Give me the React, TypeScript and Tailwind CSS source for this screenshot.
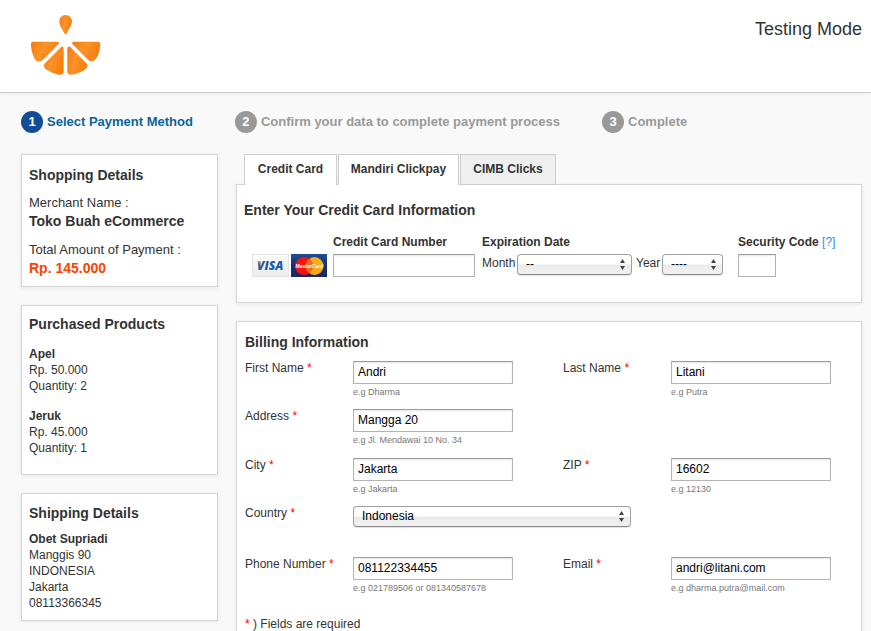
import type { ReactNode } from 'react';

function Logo() {
  return (
    <svg viewBox="90 42 216 186" className="h-[62px] w-[72px]" role="img" aria-label="Orange slice">
      <defs>
        <linearGradient id="juice" x1="0" y1="0" x2="1" y2="0.4">
          <stop offset="0" stopColor="#f37a10" />
          <stop offset="0.5" stopColor="#fb9228" />
          <stop offset="1" stopColor="#f7800f" />
        </linearGradient>
      </defs>
      <g fill="url(#juice)">
        <path d="M197 45C208 45 216 54 216 64C216 72 211 81 205 91L199 102Q197 106 195 102L188 91C182 81 178 72 178 64C178 54 186 45 197 45Z" />
        <path d="M99 125H172Q180 126 176 132L131 178Q123 186 112 184Q105 182 100 168Q94 155 93 137Q91 126 99 125Z" />
        <path d="M222 125H295Q302 126 301 134Q300 155 293 168Q285 183 277 184Q270 186 262 178L218 133Q214 126 222 125Z" />
        <path d="M184 140Q191 138 191 147V216Q190 226 176 224Q154 220 138 208Q127 199 135 190Z" />
        <path d="M210 140Q202 137 202 147V216Q203 226 216 224Q240 220 257 207Q267 199 259 190Z" />
      </g>
    </svg>
  );
}

function VisaCard() {
  return (
    <svg viewBox="0 0 37 23" className="h-[23px] w-[37px]" role="img" aria-label="Visa">
      <defs>
        <linearGradient id="visaBack" x1="0" y1="0" x2="0" y2="1">
          <stop offset="0" stopColor="#fcfcfc" />
          <stop offset="1" stopColor="#ececee" />
        </linearGradient>
      </defs>
      <rect x="0.5" y="0.5" width="36" height="22" fill="url(#visaBack)" stroke="#e4e4e6" />
      <text x="5" y="16" fontFamily="Open Sans, sans-serif" fontSize="12" fontWeight="800" fontStyle="italic" fill="#1a5ba6">
        VISA
      </text>
      <path d="M5.500 7.300H8.800L9.400 11.500Q8 9 5.500 7.300Z" fill="#eda62f" />
    </svg>
  );
}

function MasterCard() {
  return (
    <svg viewBox="0 0 36 23" className="h-[23px] w-[36px]" role="img" aria-label="MasterCard">
      <defs>
        <linearGradient id="mcBack" x1="0" y1="0" x2="0" y2="1">
          <stop offset="0" stopColor="#1f4f94" />
          <stop offset="0.5" stopColor="#16306f" />
          <stop offset="1" stopColor="#1b2867" />
        </linearGradient>
      </defs>
      <rect width="36" height="23" fill="url(#mcBack)" />
      <circle cx="23.500" cy="12" r="9" fill="#f9ab1a" />
      <circle cx="13" cy="12" r="9" fill="#f5120f" />
      <path d="M18.200 4.700A9 9 0 0 1 18.200 19.300A9 9 0 0 1 18.200 4.700Z" fill="#f46a18" />
      <text x="4.500" y="14" fontFamily="Liberation Sans, Arial, sans-serif" fontSize="5" fontWeight="700" fontStyle="italic" fill="#fff">
        MasterCard
      </text>
    </svg>
  );
}

function Step({ number, active = false, children }: { number: number; active?: boolean; children: ReactNode }) {
  return (
    <li className={`flex items-center gap-1 whitespace-nowrap text-[13px] font-bold ${active ? 'text-[#0b6499]' : 'text-[#999]'}`}>
      <span className={`flex size-[22px] items-center justify-center rounded-full text-[13px] text-white ${active ? 'bg-[#114d96]' : 'bg-[#999]'}`}>
        {number}
      </span>
      {children}
    </li>
  );
}

function Card({ className = '', children }: { className?: string; children: ReactNode }) {
  return <section className={`border border-[#d5d5d5] bg-white shadow-[0_1px_4px_rgba(0,0,0,0.08)] ${className}`}>{children}</section>;
}

function Title({ children }: { children: ReactNode }) {
  return <h2 className="text-sm font-bold">{children}</h2>;
}

const field =
  'h-[23px] rounded-none border border-[#b4b4b4] border-t-[#9c9c9c] bg-white px-1 pb-[2px] text-xs text-black shadow-[inset_0_1px_2px_rgba(0,0,0,0.10)] outline-none';

const tab = 'h-[31px] border border-[#ccc] pb-0.5';

function Select({ id, options, className }: { id: string; options: string[]; className: string }) {
  return (
    <span className={`relative inline-block ${className}`}>
      <select
        id={id}
        className="block h-[21px] w-full appearance-none rounded-[4px] border border-[#a0a0a0] border-b-[#8a8a8a] bg-linear-to-b from-white from-45% via-[#ebebeb] via-55% to-[#f1f1f1] pr-5 pb-0.5 pl-2 text-xs leading-4 text-black shadow-[0_1px_1px_rgba(0,0,0,0.12)] outline-none"
      >
        {options.map((o) => (
          <option key={o}>{o}</option>
        ))}
      </select>
      <svg viewBox="0 0 5 11" className="pointer-events-none absolute top-[5px] right-[7px] h-[11px] w-[5px]" fill="#444">
        <path d="M0 4L2.500 0L5 4ZM0 7H5L2.500 11Z" />
      </svg>
    </span>
  );
}

function Label({ id, children }: { id: string; children: ReactNode }) {
  return (
    <label htmlFor={id} className="leading-[14px]">
      {children} <span className="text-[#f00]">*</span>
    </label>
  );
}

function Field({ id, label, value, hint, wide = false }: { id: string; label: string; value: string; hint: string; wide?: boolean }) {
  return (
    <>
      <Label id={id}>{label}</Label>
      <div className={wide ? 'col-span-3' : ''}>
        <input id={id} defaultValue={value} className={`block w-40 ${field}`} />
        <p className="mt-0.5 text-[9px] leading-3 whitespace-nowrap text-[#777]">{hint}</p>
      </div>
    </>
  );
}

export default function App() {
  return (
    <div className="min-h-screen bg-[#f9f9f9] font-['Liberation_Sans',Arial,sans-serif] text-xs leading-4 text-[#333]">
      <header className="flex h-[93px] items-start justify-between border-b border-[#ccc] bg-white pt-3.5 pr-[9px] pl-[30px] shadow-[0_1px_4px_rgba(0,0,0,0.06)]">
        <Logo />
        <p className="text-lg leading-[30px]">Testing Mode</p>
      </header>

      <ol className="flex gap-[42px] pt-[18px] pl-[21px]">
        <Step number={1} active>
          Select Payment Method
        </Step>
        <Step number={2}>Confirm your data to complete payment process</Step>
        <Step number={3}>Complete</Step>
      </ol>

      <div className="flex items-start gap-[18px] pt-[21px] pr-[9px] pl-[21px]">
        <aside className="flex w-[197px] shrink-0 flex-col gap-[18px]">
          <Card className="px-[7px] pt-2.5 pb-[9px]">
            <Title>Shopping Details</Title>
            <p className="mt-[9px] text-[13px] leading-[18px]">Merchant Name :</p>
            <p className="text-sm leading-[18px] font-bold">Toko Buah eCommerce</p>
            <p className="mt-[11px] text-[13px] leading-[18px]">Total Amount of Payment :</p>
            <p className="text-sm leading-[18px] font-bold text-[#ff4200]">Rp. 145.000</p>
          </Card>
          <Card className="px-[7px] pt-2 pb-[18px]">
            <Title>Purchased Products</Title>
            <p className="mt-3 font-bold">Apel</p>
            <p>Rp. 50.000</p>
            <p>Quantity: 2</p>
            <p className="mt-3.5 font-bold">Jeruk</p>
            <p>Rp. 45.000</p>
            <p>Quantity: 1</p>
          </Card>
          <Card className="px-[7px] pt-[9px] pb-[9px]">
            <Title>Shipping Details</Title>
            <p className="mt-2 font-bold">Obet Supriadi</p>
            <p>Manggis 90</p>
            <p>INDONESIA</p>
            <p>Jakarta</p>
            <p>08113366345</p>
          </Card>
        </aside>

        <main className="min-w-0 flex-1">
          <div className="relative -mb-px flex gap-px pl-2 font-bold" role="tablist">
            <button role="tab" aria-selected="true" className={`w-[93px] border-b-0 bg-white ${tab}`}>
              Credit Card
            </button>
            <button role="tab" aria-selected="false" className={`w-[121px] border-b-0 bg-white ${tab}`}>
              Mandiri Clickpay
            </button>
            <button role="tab" aria-selected="false" className={`w-24 bg-[#efefef] ${tab}`}>
              CIMB Clicks
            </button>
          </div>
          <Card className="px-[7px] pt-[15px] pb-[25px]">
            <Title>Enter Your Credit Card Information</Title>
            <div className="mt-3.5 flex items-start pl-2">
              <div className="flex gap-0.5 pt-5">
                <VisaCard />
                <MasterCard />
              </div>
              <div className="ml-1.5">
                <label htmlFor="card" className="block font-bold">
                  Credit Card Number
                </label>
                <input id="card" className={`mt-1 block w-[142px] ${field}`} />
              </div>
              <fieldset className="ml-[7px]">
                <legend className="font-bold">Expiration Date</legend>
                <div className="mt-1 flex items-start whitespace-nowrap">
                  <label htmlFor="month" className="w-[35px] leading-[18px]">
                    Month
                  </label>
                  <Select id="month" options={['--', '01', '02', '03', '04', '05', '06', '07', '08', '09', '10', '11', '12']} className="w-[115px]" />
                  <label htmlFor="year" className="w-[30px] pl-1 leading-[18px]">
                    Year
                  </label>
                  <Select id="year" options={['----', '2013', '2014', '2015', '2016']} className="w-[61px]" />
                </div>
              </fieldset>
              <div className="ml-[15px] whitespace-nowrap">
                <label htmlFor="cvv" className="font-bold">
                  Security Code
                </label>{' '}
                <a href="#cvv" className="text-[#2a8fe6]">
                  [?]
                </a>
                <input id="cvv" className={`mt-1 block w-[38px] ${field}`} />
              </div>
            </div>
          </Card>

          <Card className="mt-[18px] pt-2.5 pr-[30px] pb-8 pl-2">
            <Title>Billing Information</Title>
            <div className="mt-[9px] grid grid-cols-[108px_1fr_108px_160px] grid-rows-[48px_49px_48px_51px_48px]">
              <Field id="first" label="First Name" value="Andri" hint="e.g Dharma" />
              <Field id="last" label="Last Name" value="Litani" hint="e.g Putra" />
              <Field id="address" label="Address" value="Mangga 20" hint="e.g Jl. Mendawai 10 No. 34" wide />
              <Field id="city" label="City" value="Jakarta" hint="e.g Jakarta" />
              <Field id="zip" label="ZIP" value="16602" hint="e.g 12130" />
              <Label id="country">Country</Label>
              <div className="col-span-3">
                <Select id="country" options={['Indonesia', 'Malaysia', 'Singapore']} className="w-[278px]" />
              </div>
              <Field id="phone" label="Phone Number" value="081122334455" hint="e.g 021789506 or 081340587678" />
              <Field id="email" label="Email" value="andri@litani.com" hint="e.g dharma.putra@mail.com" />
            </div>
            <p className="mt-[11px]">
              <span className="text-[#f00]">*</span> ) Fields are required
            </p>
          </Card>
        </main>
      </div>
    </div>
  );
}
